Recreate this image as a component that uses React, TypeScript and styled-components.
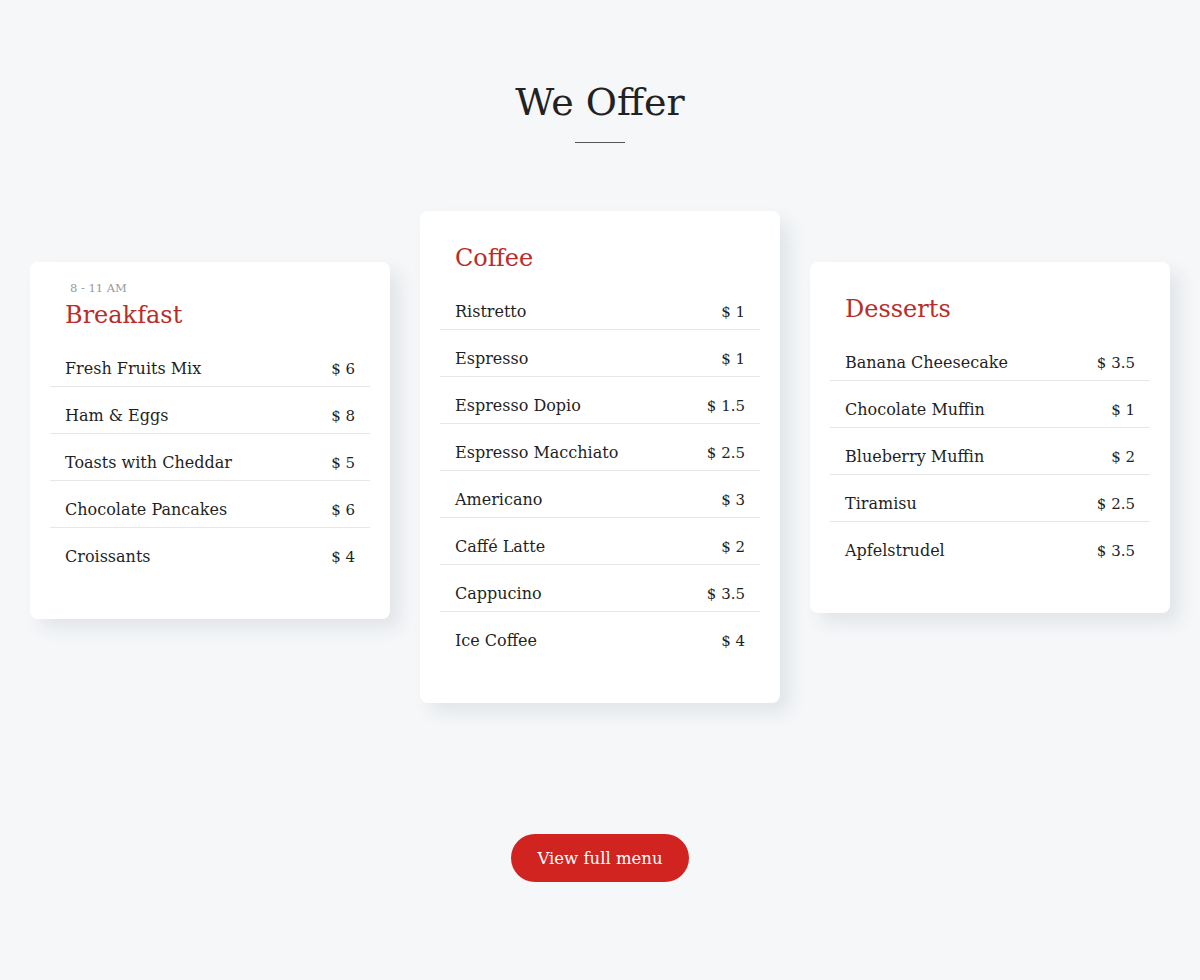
import React from "react";
import styled, { createGlobalStyle } from "styled-components";

const GlobalStyle = createGlobalStyle`
  html, body {
    margin: 0;
    padding: 0;
    background: #f5f7f9;
  }
  body {
    font-family: "DejaVu Serif", "Liberation Serif", serif;
    color: #222;
  }
`;

const Section = styled.section`
  display: flex;
  flex-direction: column;
  align-items: center;
  padding: 78px 0 98px;
  min-height: 980px;
  box-sizing: border-box;
`;

const Heading = styled.h2`
  margin: 0;
  font-size: 38px;
  font-weight: 400;
  line-height: 48px;
  color: #222;
`;

const Divider = styled.div`
  width: 50px;
  height: 1px;
  background: #555;
  margin-top: 16px;
`;

const Cards = styled.div`
  display: flex;
  gap: 30px;
  align-items: flex-start;
  margin-top: 68px;
`;

const Card = styled.div<{ $raised?: boolean }>`
  width: 360px;
  box-sizing: border-box;
  background: #fff;
  border-radius: 8px;
  padding: 32px 20px 44px;
  margin-top: ${(p) => (p.$raised ? "0" : "51px")};
  box-shadow: 10px 10px 18px rgba(40, 50, 70, 0.09);
`;

const Header = styled.div`
  display: flex;
  flex-direction: column;
  padding: 0 15px;
  margin-bottom: 9px;
`;

const Hours = styled.span`
  font-size: 11.5px;
  line-height: 16px;
  color: #999;
  margin: -14px 0 4px 5px;
`;

const Title = styled.h3`
  margin: 0;
  font-size: 24px;
  line-height: 31px;
  font-weight: 400;
  color: #b82d29;
`;

const List = styled.ul`
  list-style: none;
  margin: 0;
  padding: 0;
`;

const Row = styled.li`
  display: flex;
  justify-content: space-between;
  align-items: baseline;
  padding: 19px 15px 7px;
  line-height: 20px;
  font-size: 16px;
  color: #1f1f1f;
  border-bottom: 1px solid #e4e6e8;
  &:last-child {
    border-bottom-color: transparent;
  }
`;

const Price = styled.span`
  font-size: 15px;
`;

const Button = styled.button`
  margin-top: 131px;
  width: 178px;
  height: 48px;
  border: none;
  border-radius: 24px;
  background: #d1231f;
  color: #fff;
  font-family: "DejaVu Serif", "Liberation Serif", serif;
  font-size: 16.5px;
  cursor: pointer;
`;

type Item = [string, string];

const menus: { title: string; hours?: string; raised?: boolean; items: Item[] }[] = [
  {
    title: "Breakfast",
    hours: "8 - 11 AM",
    items: [
      ["Fresh Fruits Mix", "$ 6"],
      ["Ham & Eggs", "$ 8"],
      ["Toasts with Cheddar", "$ 5"],
      ["Chocolate Pancakes", "$ 6"],
      ["Croissants", "$ 4"],
    ],
  },
  {
    title: "Coffee",
    raised: true,
    items: [
      ["Ristretto", "$ 1"],
      ["Espresso", "$ 1"],
      ["Espresso Dopio", "$ 1.5"],
      ["Espresso Macchiato", "$ 2.5"],
      ["Americano", "$ 3"],
      ["Caffé Latte", "$ 2"],
      ["Cappucino", "$ 3.5"],
      ["Ice Coffee", "$ 4"],
    ],
  },
  {
    title: "Desserts",
    items: [
      ["Banana Cheesecake", "$ 3.5"],
      ["Chocolate Muffin", "$ 1"],
      ["Blueberry Muffin", "$ 2"],
      ["Tiramisu", "$ 2.5"],
      ["Apfelstrudel", "$ 3.5"],
    ],
  },
];

export default function App() {
  return (
    <>
      <GlobalStyle />
      <Section>
        <Heading>We Offer</Heading>
        <Divider />
        <Cards>
          {menus.map((m) => (
            <Card key={m.title} $raised={m.raised}>
              <Header>
                {m.hours && <Hours>{m.hours}</Hours>}
                <Title>{m.title}</Title>
              </Header>
              <List>
                {m.items.map(([name, price]) => (
                  <Row key={name}>
                    <span>{name}</span>
                    <Price>{price}</Price>
                  </Row>
                ))}
              </List>
            </Card>
          ))}
        </Cards>
        <Button>View full menu</Button>
      </Section>
    </>
  );
}
